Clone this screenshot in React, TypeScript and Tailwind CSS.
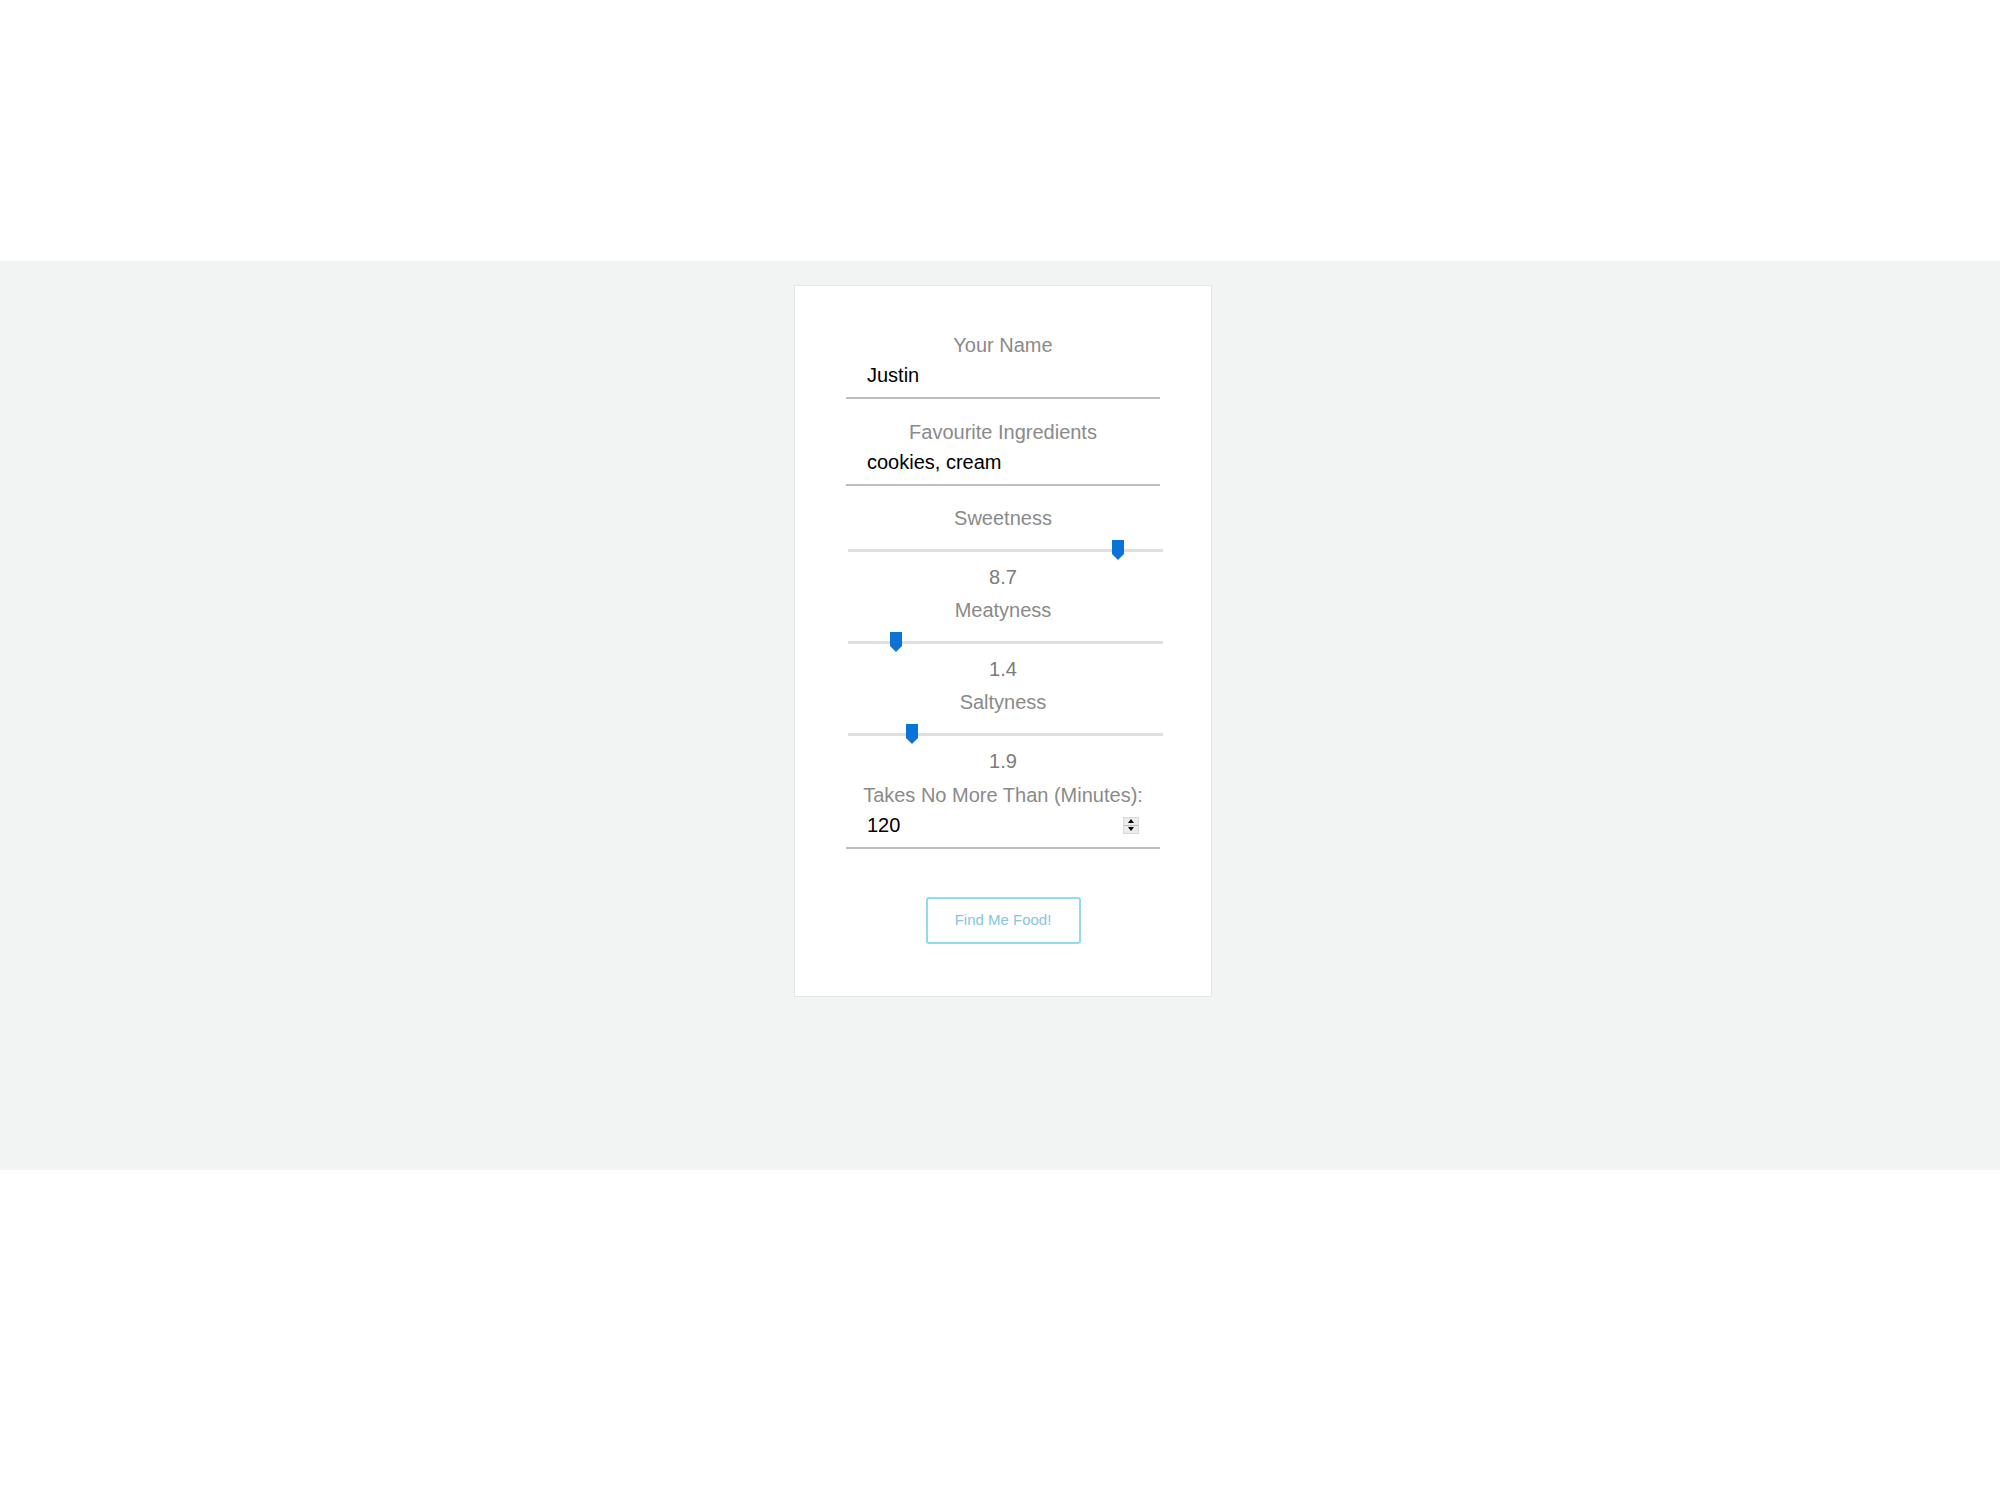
import { useState } from "react";

const font = { fontFamily: "'Liberation Sans', Arial, sans-serif" };

interface SliderProps {
  label: string
  value: number
}

function Thumb() {
  return (
    <svg width="12" height="20" viewBox="0 0 12 20">
      <path d="M0 0 H12 V14 L6 20 L0 14 Z" fill="#0b72d8" />
    </svg>
  );
}

function FlavourSlider({ label, value } : SliderProps) {
  // thumb travels across the track minus its own width
  const left = (value / 10) * 303;

  return (
    <div>
      <p className="text-[20px] leading-[24px] text-center text-[#8a8a8a]">{label}</p>
      <div className="relative h-[30px] mt-[5px] ml-[2px] w-[315px]">
        <div className="absolute left-0 right-0 top-[14px] h-[3px] bg-[#dedfdf]" />
        <div className="absolute top-[5px]" style={{ left: `${left}px` }}>
          <Thumb />
        </div>
      </div>
      <p className="text-[20px] leading-[24px] text-center text-[#7b7b7b]">{value.toFixed(1)}</p>
    </div>
  );
}

function Spinner() {
  return (
    <div className="w-[16px] h-[17px] mr-[21px] flex flex-col bg-[#ececec] border border-[#d9d9d9]">
      <div className="flex-1 flex items-center justify-center border-b border-[#bdbdbd]">
        <div className="w-0 h-0 border-l-[3px] border-r-[3px] border-b-[4px] border-l-transparent border-r-transparent border-b-black" />
      </div>
      <div className="flex-1 flex items-center justify-center">
        <div className="w-0 h-0 border-l-[3px] border-r-[3px] border-t-[4px] border-l-transparent border-r-transparent border-t-black" />
      </div>
    </div>
  );
}

export default function App() {
  const [ name, setName ] = useState("Justin");
  const [ ingredients, setIngredients ] = useState("cookies, cream");
  const [ minutes, setMinutes ] = useState("120");

  return (
    <div className="min-h-screen bg-white pt-[261px]" style={font}>
      <div className="h-[909px] bg-[#f2f3f3] pt-[24px] pl-[6px] flex justify-center items-start">
        <div className="w-[418px] bg-white border border-[#e4e6e6] pt-[47px] pb-[52px] px-[51px]">
          <div>
            <p className="text-[20px] leading-[24px] text-center text-[#8a8a8a]">Your Name</p>
            <div className="h-[42px] pb-[4px] border-b-2 border-[#bdbdbd] flex items-center">
              <input type="text" value={name} onChange={(e) => setName(e.target.value)} className="w-full h-[36px] pl-[21px] text-[20px] text-black bg-transparent outline-none" />
            </div>
          </div>
          <div className="mt-[21px]">
            <p className="text-[20px] leading-[24px] text-center text-[#8a8a8a]">Favourite Ingredients</p>
            <div className="h-[42px] pb-[4px] border-b-2 border-[#bdbdbd] flex items-center">
              <input type="text" value={ingredients} onChange={(e) => setIngredients(e.target.value)} className="w-full h-[36px] pl-[21px] text-[20px] text-black bg-transparent outline-none" />
            </div>
          </div>
          <div className="mt-[20px]">
            <FlavourSlider label="Sweetness" value={8.7} />
          </div>
          <div className="mt-[9px]">
            <FlavourSlider label="Meatyness" value={1.4} />
          </div>
          <div className="mt-[9px]">
            <FlavourSlider label="Saltyness" value={1.9} />
          </div>
          <div className="mt-[10px]">
            <p className="text-[20px] leading-[24px] text-center text-[#8a8a8a]">Takes No More Than (Minutes):</p>
            <div className="h-[42px] pb-[4px] border-b-2 border-[#bdbdbd] flex items-center">
              <input type="text" value={minutes} onChange={(e) => setMinutes(e.target.value)} className="flex-1 min-w-0 h-[36px] pl-[21px] text-[20px] text-black bg-transparent outline-none" />
              <Spinner />
            </div>
          </div>
          <div className="mt-[48px] flex justify-center">
            <button type="button" className="w-[155px] h-[47px] border-2 border-[#8edcf0] rounded-[3px] text-[15px] text-[#86c4e6] bg-white">Find Me Food!</button>
          </div>
        </div>
      </div>
    </div>
  );
}
